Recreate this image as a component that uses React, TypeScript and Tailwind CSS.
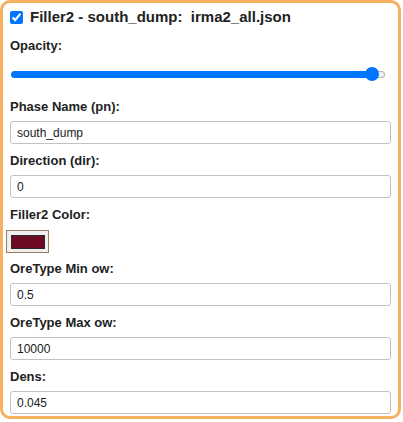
import { useState } from 'react';

// Small labelled text input row
function Field({ label, value, className = 'mt-[9px]' }: { label: string; value: string; className?: string }) {
  const [val, setVal] = useState(value);
  return (
    <div className={className}>
      <label className="block text-[13px] leading-[16px] font-bold text-[#222]">{label}</label>
      <input
        type="text"
        value={val}
        onChange={(e) => setVal(e.target.value)}
        className="mt-[6px] block w-[381px] h-[23px] border border-[#c2c2c2] rounded-[3px] bg-white px-[6px] text-[12px] text-[#1a1a1a] outline-none"
      />
    </div>
  );
}

export default function App() {
  const [enabled, setEnabled] = useState(true);

  return (
    <div className="w-[403px] h-[422px] bg-white font-['Liberation_Sans',Arial,sans-serif]">
      <div className="w-[401px] border-[3px] border-[#f5b160] rounded-[10px] px-[7px] pt-[5px] pb-[2px]">
        {/* Header */}
        <div className="flex items-center gap-[7px] h-[18px]">
          <input
            type="checkbox"
            checked={enabled}
            onChange={(e) => setEnabled(e.target.checked)}
            className="w-[13px] h-[13px] accent-[#0075ff]"
          />
          <span className="text-[15px] font-bold text-[#222] whitespace-pre">
            {'Filler2 - south_dump:  irma2_all.json'}
          </span>
        </div>

        {/* Opacity */}
        <div className="mt-[12px] text-[13px] leading-[16px] font-bold text-[#222]">Opacity:</div>
        <div className="relative mt-[12px] ml-[1px] w-[374px] h-[16px] flex items-center">
          <div className="flex w-full h-[7px]">
            <div className="w-[361px] h-full bg-[#0075ff] rounded-l-full" />
            <div className="flex-1 h-full bg-[#efefef] border border-[#b5b5b5] border-l-0 rounded-r-full" />
          </div>
          <div className="absolute left-[354px] top-[1px] w-[14px] h-[14px] rounded-full bg-[#0075ff]" />
        </div>

        <Field label="Phase Name (pn):" value="south_dump" className="mt-[17px]" />
        <Field label="Direction (dir):" value="0" />

        {/* Color */}
        <div className="mt-[9px]">
          <div className="text-[13px] leading-[16px] font-bold text-[#222]">Filler2 Color:</div>
          <div className="mt-[7px] ml-[-4px] w-[43px] h-[23px] border border-[#9c7b5b] bg-[#efefef] flex items-center pl-[4px]">
            <div className="w-[34px] h-[14px] bg-[#6b0a22] border border-[#2a2a2a]" />
          </div>
        </div>

        <Field label="OreType Min ow:" value="0.5" className="mt-[8px]" />
        <Field label="OreType Max ow:" value="10000" />
        <Field label="Dens:" value="0.045" />
      </div>
    </div>
  );
}
